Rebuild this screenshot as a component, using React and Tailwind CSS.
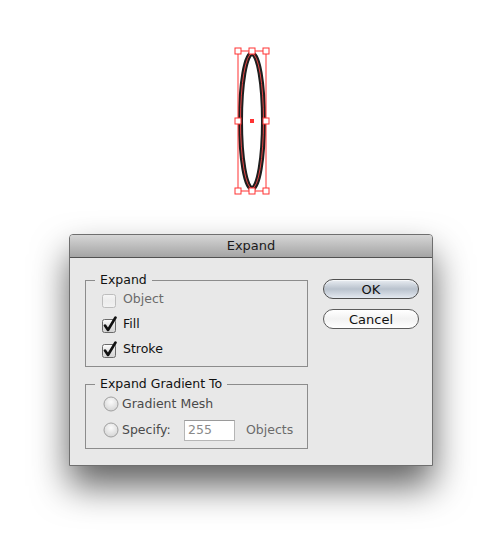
import React from 'react'

const font = { fontFamily: '"DejaVu Sans", "Liberation Sans", sans-serif' }

const Checkbox = ({ checked, disabled }) => (
  <svg width="17" height="17" viewBox="0 0 17 17" className="shrink-0">
    <defs>
      <linearGradient id={disabled ? 'cbd' : 'cb'} x1="0" y1="0" x2="0" y2="1">
        <stop offset="0" stopColor={disabled ? '#f6f6f6' : '#ffffff'} />
        <stop offset="0.5" stopColor={disabled ? '#ececec' : '#e2e2e2'} />
        <stop offset="1" stopColor={disabled ? '#f2f2f2' : '#d2d2d2'} />
      </linearGradient>
    </defs>
    <rect x="0.5" y="3.5" width="13" height="13" rx="2" fill={`url(#${disabled ? 'cbd' : 'cb'})`} stroke={disabled ? '#bdbdbd' : '#6a6a6a'} />
    {checked && (
      <path d="M3 9.5 L6 14 L13.5 1.5" fill="none" stroke="#111" strokeWidth="2.6" strokeLinejoin="round" strokeLinecap="round" />
    )}
  </svg>
)

const Radio = () => (
  <svg width="16" height="16" viewBox="0 0 16 16" className="shrink-0">
    <defs>
      <radialGradient id="rd" cx="0.5" cy="0.35" r="0.7">
        <stop offset="0" stopColor="#fbfbfb" />
        <stop offset="1" stopColor="#d2d2d2" />
      </radialGradient>
    </defs>
    <circle cx="8" cy="8" r="7" fill="url(#rd)" stroke="#a0a0a0" />
  </svg>
)

const Handle = ({ x, y }) => (
  <rect x={x - 3} y={y - 3} width="6" height="6" fill="#fff" stroke="#f33" strokeWidth="1" />
)

export default function App() {
  return (
    <div className="w-[497px] h-[553px] bg-white flex flex-col overflow-hidden" style={font}>
      <svg width="40" height="152" viewBox="0 0 40 152" className="ml-[232px] mt-[45px] shrink-0">
        <ellipse cx="20" cy="76" rx="11.5" ry="67.5" fill="none" stroke="#1e1e1e" strokeWidth="5" />
        <ellipse cx="20" cy="76" rx="11.5" ry="67.5" fill="none" stroke="#ff4a4a" strokeWidth="0.9" />
        <rect x="6" y="6" width="28" height="140" fill="none" stroke="#f33" strokeWidth="1" />
        <Handle x={6} y={6} />
        <Handle x={20} y={6} />
        <Handle x={34} y={6} />
        <Handle x={6} y={76} />
        <Handle x={34} y={76} />
        <Handle x={6} y={146} />
        <Handle x={20} y={146} />
        <Handle x={34} y={146} />
        <rect x="18" y="74" width="4" height="4" fill="#f33" />
      </svg>

      <div className="ml-[69px] mt-[37px] w-[364px] h-[232px] border border-[#6f6f6f] rounded-t-[4px] bg-[#e8e8e8] shadow-[0_20px_36px_rgba(0,0,0,0.62)] flex flex-col text-[12.5px] text-[#111]">
        <div className="h-[23px] shrink-0 border-b border-[#505050] rounded-t-[3px] bg-gradient-to-b from-[#d6d6d6] to-[#a4a4a4] flex items-center justify-center">
          <span className="text-[13px] text-[#1a1a1a]">Expand</span>
        </div>

        <div className="flex pt-[14px] pl-[15px]">
          <div className="flex flex-col w-[223px]">
            <fieldset className="border border-[#8c8c8c] pl-[16px] pb-[7px] flex flex-col gap-[5px]">
              <legend className="ml-[-7px] px-[5px] leading-[16px]">Expand</legend>
              <div className="mt-[1px] h-[20px] flex items-center gap-[4px] text-[#6b6b6b]">
                <Checkbox disabled />
                <span>Object</span>
              </div>
              <div className="h-[20px] flex items-center gap-[4px]">
                <Checkbox checked />
                <span>Fill</span>
              </div>
              <div className="h-[20px] flex items-center gap-[4px]">
                <Checkbox checked />
                <span>Stroke</span>
              </div>
            </fieldset>

            <fieldset className="mt-[9px] border border-[#8c8c8c] pl-[17px] pb-[7px] flex flex-col gap-[5px]">
              <legend className="ml-[-8px] px-[5px] leading-[16px]">Expand Gradient To</legend>
              <div className="mt-[2px] h-[20px] flex items-center gap-[3px] text-[#4a4a4a]">
                <Radio />
                <span>Gradient Mesh</span>
              </div>
              <div className="h-[22px] flex items-center gap-[3px] text-[#4a4a4a]">
                <Radio />
                <span className="w-[59px]">Specify:</span>
                <div className="w-[51px] h-[21px] bg-white border border-[#b5b5b5] border-t-[#9a9a9a] flex items-center pl-[3px] text-[#8a8a8a]">
                  255
                </div>
                <span className="ml-[8px] text-[#6b6b6b]">Objects</span>
              </div>
            </fieldset>
          </div>

          <div className="ml-[15px] mt-[7px] flex flex-col gap-[10px]">
            <button className="w-[96px] h-[20px] rounded-full border border-[#4f4f4f] bg-gradient-to-b from-[#e9edf2] via-[#b9c2cd] to-[#e4e9f0] text-[13px] text-[#111] leading-none shadow-[inset_0_1px_0_rgba(255,255,255,0.6)]">
              OK
            </button>
            <button className="w-[96px] h-[20px] rounded-full border border-[#5c5c5c] bg-gradient-to-b from-[#ffffff] via-[#f2f2f2] to-[#ffffff] text-[13px] text-[#111] leading-none">
              Cancel
            </button>
          </div>
        </div>
      </div>
    </div>
  )
}
